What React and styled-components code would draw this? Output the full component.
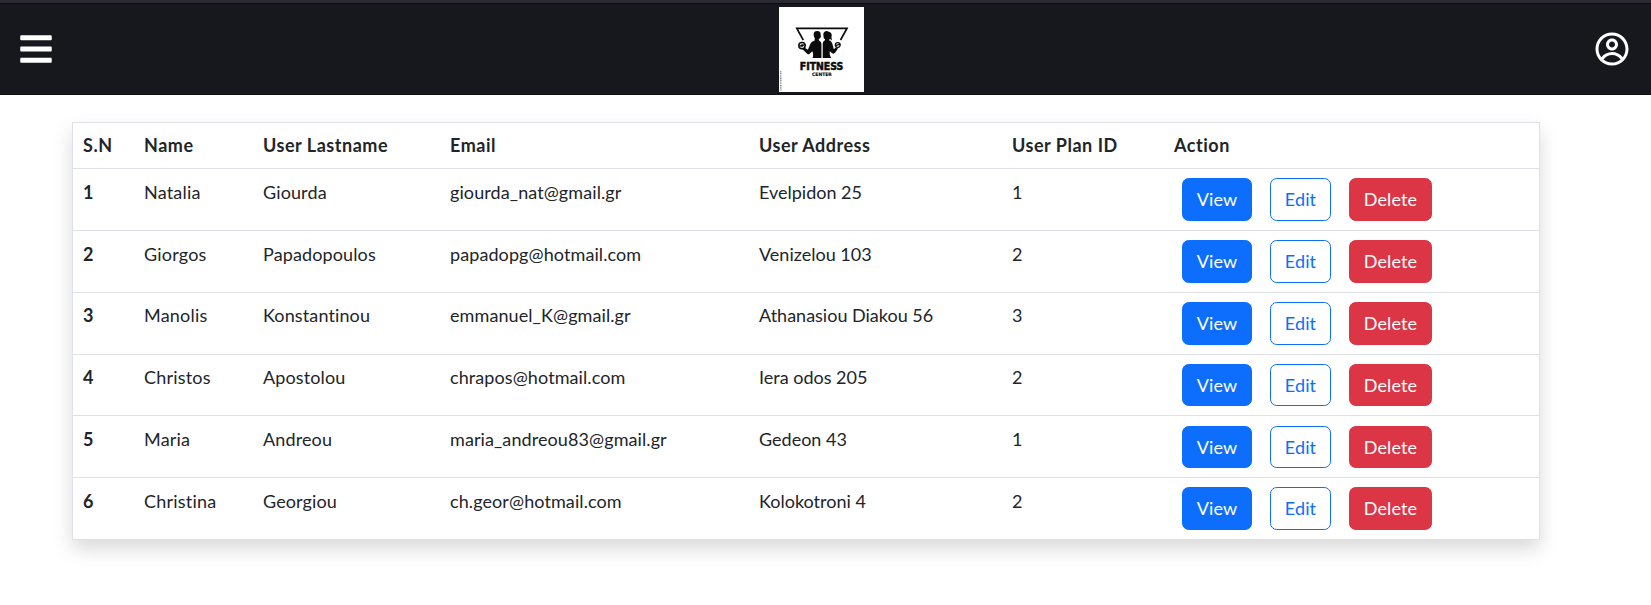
import React from "react";
import styled, { createGlobalStyle, css } from "styled-components";
import { FaBars } from "react-icons/fa";
import { CgProfile } from "react-icons/cg";

const GlobalStyle = createGlobalStyle`
  *, *::before, *::after { box-sizing: border-box; }
  body {
    margin: 0;
    background: #fff;
    color: #212529;
    font-family: Lato, "Liberation Sans", sans-serif;
    font-size: 18px;
    line-height: 27px;
    font-variant-ligatures: none;
  }
`;

const Navbar = styled.header`
  display: grid;
  grid-template-columns: 761px 85px 1fr;
  align-items: center;
  height: 95px;
  padding: 0 21px 0 18px;
  border-top: 3px solid #2b2a33;
  background: #16181d;
  box-shadow: inset 0 1px 0 #0c0c0f, inset 0 -1px 0 #100f16;
  color: #fff;
`;

const IconButton = styled.button`
  display: flex;
  justify-self: ${({ $align }) => $align};
  padding: 0;
  border: 0;
  background: none;
  color: inherit;
  font-size: 36px;
  cursor: pointer;
`;

const Logo = styled.svg`
  display: block;
  width: 85px;
  height: 85px;
  margin-top: 1px;
  background: #fff;
`;

const Main = styled.main`
  min-height: 510px;
  padding: 27px 111px 0 72px;
`;

const UserTable = styled.table`
  width: 1468px;
  table-layout: fixed;
  border-collapse: separate;
  border-spacing: 0;
  border: 1px solid #dee2e6;
  border-bottom: 0;
  box-shadow: 0 9px 18px rgba(0, 0, 0, 0.15);
`;

const Col = styled.col`
  width: ${({ $width }) => $width}px;
`;

const cell = css`
  padding: 9px;
  border-bottom: 1px solid #dee2e6;
  text-align: left;
  vertical-align: top;
`;

const HeadCell = styled.th`
  ${cell}
  font-weight: 700;
  letter-spacing: 0.52px;

  &:first-child,
  &:last-child {
    padding-left: 10px;
  }
`;

const RowHead = styled.th`
  ${cell}
  padding: ${({ $top }) => $top}px 9px 0 10px;
  font-weight: 700;
`;

const Cell = styled.td`
  ${cell}
  padding: ${({ $top }) => $top}px 9px 0;
  letter-spacing: ${({ $tracking }) => $tracking}px;
`;

const ActionCell = styled.td`
  ${cell}
  padding: ${({ $top }) => $top}px 9px 9px 18px;
`;

const Actions = styled.div`
  display: flex;
  gap: 18px;
  height: ${({ $height }) => $height}px;
`;

const variants = {
  primary: { color: "#fff", background: "#0d6efd", border: "#0d6efd" },
  outline: { color: "#0d6efd", background: "transparent", border: "#0d6efd" },
  danger: { color: "#fff", background: "#dc3545", border: "#dc3545" },
};

const Button = styled.button`
  width: ${({ $width }) => $width}px;
  padding: 0;
  border: 1px solid ${({ $variant }) => variants[$variant].border};
  border-radius: 6.75px;
  background: ${({ $variant }) => variants[$variant].background};
  color: ${({ $variant }) => variants[$variant].color};
  font: inherit;
  letter-spacing: 0.15px;
  cursor: pointer;
`;

const columns = [
  ["S.N", 62],
  ["Name", 119],
  ["User Lastname", 187],
  ["Email", 309],
  ["User Address", 253],
  ["User Plan ID", 161],
  ["Action", 375],
];

const tracking = [0.2, 0.12, 0.09, 0, 0];

// Whole-pixel rhythm of the rows, whose nominal pitch is 61.8px.
const rhythm = [
  { text: 10, action: 9, height: 43 },
  { text: 10, action: 9, height: 43 },
  { text: 9, action: 9, height: 43 },
  { text: 9, action: 9, height: 42 },
  { text: 10, action: 10, height: 42 },
  { text: 10, action: 9, height: 43 },
];

const users = [
  ["Natalia", "Giourda", "giourda_nat@gmail.gr", "Evelpidon 25", 1],
  ["Giorgos", "Papadopoulos", "papadopg@hotmail.com", "Venizelou 103", 2],
  ["Manolis", "Konstantinou", "emmanuel_K@gmail.gr", "Athanasiou Diakou 56", 3],
  ["Christos", "Apostolou", "chrapos@hotmail.com", "Iera odos 205", 2],
  ["Maria", "Andreou", "maria_andreou83@gmail.gr", "Gedeon 43", 1],
  ["Christina", "Georgiou", "ch.geor@hotmail.com", "Kolokotroni 4", 2],
];

function FitnessLogo() {
  return (
    <Logo viewBox="0 0 85 85" role="img" aria-label="Fitness Center">
      <g fill="none" stroke="#0b0b0b">
        <path d="M24.3 33.2 17.8 21.3H68L61.5 33" strokeWidth="1.7" />
        <circle cx="23" cy="38.6" r="3.2" strokeWidth="1.5" />
        <circle cx="58.7" cy="38.1" r="2.4" strokeWidth="1.2" />
        <path d="M20.5 39.2 26.5 37.6M56.2 38.6 61.6 37.2" strokeWidth="1.3" />
      </g>
      <g fill="#0b0b0b">
        <circle cx="23" cy="38.6" r="1.3" />
        <path d="M34.7 27C34.5 24.8 36.2 23.9 38.2 23.9 40.6 23.9 41.9 25.2 41.6 27.3L42 29 41.3 31.1 39.7 32.2 40 33.5C41.6 34.2 42.4 35.5 42.6 37.3V51H33.5C34.6 48.6 34.3 46.4 33.3 44.3L30.6 46.7C29.5 47.7 28.4 47.2 27.4 46L23.2 42.1 25.3 40.6 28.9 42.8 31.2 37.3C32 35 33.5 34.2 35.5 33.7L35.8 31.3C34.8 30 34.6 28.5 34.7 27Z" />
        <path d="M44.3 27.5C44.3 25.4 45.8 24.1 47.8 24.1L50.5 25C52.7 25.7 53.2 28 52.4 30.3L53 33.6 50.8 31.8 50 33.2C52 33.8 53 35.2 53.5 37.3L54.8 42.3 57.2 40.2 59 41.4 56.3 45.5C55.3 46.8 54 47 52.9 46L50.9 44.3C50.4 46.6 50.7 48.7 52.3 51H43.5V37.2C43.6 35.3 44.4 34.1 45.8 33.4L46 32.2 44.8 31.2Z" />
      </g>
      <path d="M43.1 34.5V51" stroke="#fff" strokeWidth="0.7" />
      <text x="20.8" y="62.9" textLength="43.4" lengthAdjust="spacingAndGlyphs" fill="#0b0b0b" fontFamily="DejaVu Sans, sans-serif" fontSize="9.6" fontWeight="700" stroke="#0b0b0b" strokeWidth="0.5">
        FITNESS
      </text>
      <text x="33.1" y="68.8" textLength="19.6" lengthAdjust="spacingAndGlyphs" fill="#0b0b0b" fontFamily="DejaVu Sans, sans-serif" fontSize="4.6" fontWeight="700" stroke="#0b0b0b" strokeWidth="0.15">
        CENTER
      </text>
      <path d="M1.8 64.3V83.5" stroke="#777" strokeWidth="1.2" strokeDasharray="1.1 0.6" />
    </Logo>
  );
}

export default function App() {
  return (
    <>
      <GlobalStyle />
      <Navbar>
        <IconButton $align="start" aria-label="Menu">
          <FaBars />
        </IconButton>
        <FitnessLogo />
        <IconButton $align="end" aria-label="Profile">
          <CgProfile />
        </IconButton>
      </Navbar>
      <Main>
        <UserTable>
          <colgroup>
            {columns.map(([label, width]) => (
              <Col key={label} $width={width} />
            ))}
          </colgroup>
          <thead>
            <tr>
              {columns.map(([label]) => (
                <HeadCell key={label} scope="col">{label}</HeadCell>
              ))}
            </tr>
          </thead>
          <tbody>
            {users.map((fields, index) => (
              <tr key={fields[2]}>
                <RowHead scope="row" $top={rhythm[index].text}>{index + 1}</RowHead>
                {fields.map((value, i) => (
                  <Cell key={i} $top={rhythm[index].text} $tracking={tracking[i]}>{value}</Cell>
                ))}
                <ActionCell $top={rhythm[index].action}>
                  <Actions $height={rhythm[index].height}>
                    <Button $variant="primary" $width={70}>View</Button>
                    <Button $variant="outline" $width={61}>Edit</Button>
                    <Button $variant="danger" $width={83}>Delete</Button>
                  </Actions>
                </ActionCell>
              </tr>
            ))}
          </tbody>
        </UserTable>
      </Main>
    </>
  );
}
